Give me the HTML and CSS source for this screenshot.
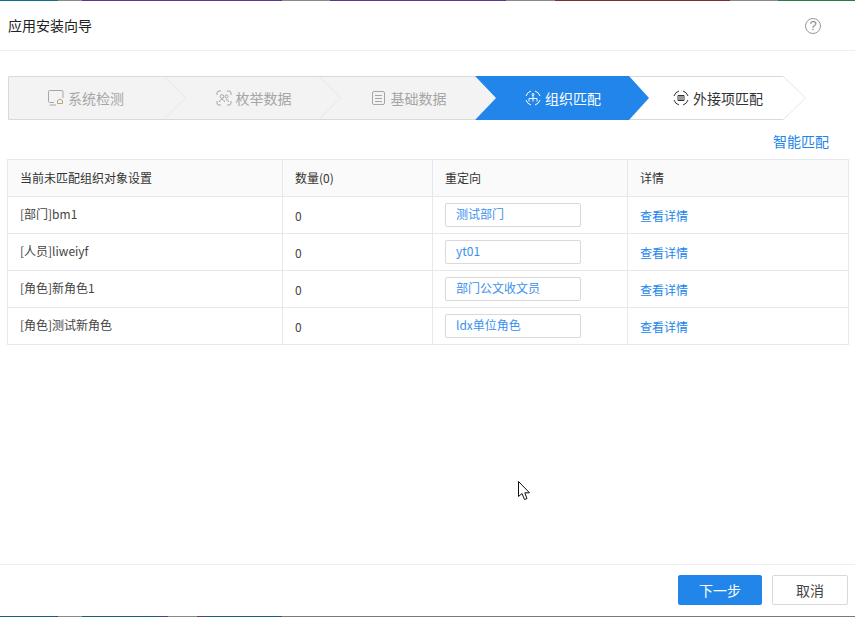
FILE: index.html
```html
<!DOCTYPE html>
<html lang="zh-CN">
<head>
<meta charset="utf-8">
<title>应用安装向导</title>
<link rel="stylesheet" href="styles.css">
</head>
<body>
<div class="page">
  <div class="strip-top"></div>
  <header class="header">
    <h1 class="title">应用安装向导</h1>
    <span class="help">?</span>
  </header>
  <nav class="stepper">
    <svg class="stepper-bg" width="798" height="44" viewBox="0 0 798 44">
      <polygon points="0,0 467,0 488,22 467,44 0,44" fill="#f3f3f3"/>
      <polygon points="621,0 776,0 798,22 776,44 621,44 641,22" fill="#fff"/>
      <path d="M0.5 0.5H467M0.5 43.5H467M0.5 0.5V43.5M621 0.5H775.5M621 43.5H775.5" fill="none" stroke="#d9d9d9"/>
      <path d="M156 0.5L177.5 22L156 43.5M311 0.5L332.5 22L311 43.5M775.5 0.5L797.5 22L775.5 43.5" fill="none" stroke="#e6e6e6"/>
      <polygon points="467,0 621,0 641,22 621,44 467,44 488,22" fill="#2185ea"/>
    </svg>
    <div class="step step-first">
      <svg class="step-icon" width="16" height="16" viewBox="0 0 16 16" fill="none" stroke="currentColor">
        <path d="M6 12.500H1.500A1 1 0 0 1 .5 11.500V1.500A1 1 0 0 1 1.500.5H14A1 1 0 0 1 15 1.500V8"/>
        <path d="M1.500 15H8"/>
        <path d="M9.500 13.500V10.500L12 9L14.500 10.500V13.500H9.500Z" stroke="#b9a27c"/>
      </svg>
      <span>系统检测</span>
    </div>
    <div class="step">
      <svg class="step-icon" width="16" height="16" viewBox="0 0 16 16" fill="none" stroke="currentColor">
        <path d="M1 5V3A2 2 0 0 1 3 1H5M11 1H13A2 2 0 0 1 15 3V5M15 11V13A2 2 0 0 1 13 15H11M5 15H3A2 2 0 0 1 1 13V11"/>
        <circle cx="6" cy="6.500" r="1.800"/>
        <circle cx="10.500" cy="6.500" r="1.500"/>
        <path d="M3.500 12C3.500 10 5 9.500 6 9.500S8.500 10 8.500 12M10 9.500C11.500 9.500 12.500 10.500 12.500 12"/>
      </svg>
      <span>枚举数据</span>
    </div>
    <div class="step">
      <svg class="step-icon" width="16" height="16" viewBox="0 0 16 16" fill="none" stroke="currentColor">
        <rect x="1.500" y="1.500" width="12" height="13" rx="1.500"/>
        <path d="M4 5.500H11M4 8.500H11M4 11.500H11"/>
      </svg>
      <span>基础数据</span>
    </div>
    <div class="step step-active">
      <svg class="step-icon" width="16" height="16" viewBox="0 0 16 16" fill="none" stroke="currentColor">
        <path d="M1 6A7.500 7.500 0 0 1 6 1M10 1A7.500 7.500 0 0 1 15 6M15 10A7.500 7.500 0 0 1 10 15M6 15A7.500 7.500 0 0 1 1 10"/>
        <path d="M4 11.500V8.500H12V11.500M8 5V11.500"/>
        <circle cx="8" cy="4.500" r="1"/>
      </svg>
      <span>组织匹配</span>
    </div>
    <div class="step step-current">
      <svg class="step-icon" width="16" height="16" viewBox="0 0 16 16" fill="none" stroke="currentColor">
        <path d="M1 6A7.500 7.500 0 0 1 6 1M10 1A7.500 7.500 0 0 1 15 6M15 10A7.500 7.500 0 0 1 10 15M6 15A7.500 7.500 0 0 1 1 10"/>
        <path d="M5 5.500H11V10.500H5ZM7 5.500V10.500M9 5.500V10.500"/>
      </svg>
      <span>外接项匹配</span>
    </div>
  </nav>
  <div class="actions"><a class="link link-large">智能匹配</a></div>
  <table class="grid">
    <colgroup>
      <col class="col-name"><col class="col-count"><col class="col-redirect"><col class="col-detail">
    </colgroup>
    <thead>
      <tr><th>当前未匹配组织对象设置</th><th>数量(0)</th><th>重定向</th><th>详情</th></tr>
    </thead>
    <tbody>
      <tr><td class="name">[部门]bm1</td><td class="num">0</td><td><div class="redirect">测试部门</div></td><td><a class="link">查看详情</a></td></tr>
      <tr><td class="name">[人员]liweiyf</td><td class="num">0</td><td><div class="redirect">yt01</div></td><td><a class="link">查看详情</a></td></tr>
      <tr><td class="name">[角色]新角色1</td><td class="num">0</td><td><div class="redirect">部门公文收文员</div></td><td><a class="link">查看详情</a></td></tr>
      <tr><td class="name">[角色]测试新角色</td><td class="num">0</td><td><div class="redirect">ldx单位角色</div></td><td><a class="link">查看详情</a></td></tr>
    </tbody>
  </table>
  <div class="spacer"></div>
  <footer class="footer">
    <button class="btn btn-primary">下一步</button>
    <button class="btn">取消</button>
  </footer>
  <div class="strip-bottom"></div>
  <svg class="cursor" width="13" height="20" viewBox="0 0 13 20">
    <path d="M.5.5V15.500L4 12.500L6.500 18.500L9 17.500L6.800 11.800H11.500Z" fill="#fff" stroke="#111" stroke-width="1"/>
  </svg>
</div>
</body>
</html>
```
FILE: styles.css
```css
* { box-sizing: border-box; }
html, body { margin: 0; padding: 0; background: #fff; }
body { font-family: "Noto Sans CJK SC", "Liberation Sans", sans-serif; color: #333; }
.page {
  position: relative;
  width: 855px;
  height: 617px;
  display: flex;
  flex-direction: column;
  overflow: hidden;
}
.strip-top {
  height: 1px;
  flex: none;
  background: linear-gradient(to right,
    #0f6f86 0 58px, #8a8a8a 58px 82px, #5f3590 82px 282px, #8a8a8a 282px 330px,
    #5f3590 330px 506px, #8a8a8a 506px 555px, #7c2f33 555px 730px, #8a8a8a 730px 778px,
    #2c7a3f 778px);
}
.strip-bottom {
  height: 1px;
  flex: none;
  background: linear-gradient(to right,
    #14607e 0 58px, #8a8a8a 58px 82px, #14607e 82px 158px, #5f3590 158px 168px,
    #8a8a8a 168px 197px, #5f3590 197px 205px, #14607e 205px 282px, #7a7a7a 282px);
}
.header {
  height: 50px;
  flex: none;
  display: flex;
  align-items: center;
  justify-content: space-between;
  padding: 0 34px 0 8px;
  border-bottom: 1px solid #eee;
}
.title { margin: 0 0 2px; font-size: 14px; font-weight: 400; color: #222; line-height: 20px; }
.help {
  width: 16px;
  height: 16px;
  border: 1.500px solid #999;
  border-radius: 50%;
  color: #888;
  font-size: 13px;
  font-family: "Liberation Sans", sans-serif;
  line-height: 13px;
  text-align: center;
}
.stepper {
  position: relative;
  flex: none;
  display: flex;
  width: 798px;
  height: 44px;
  margin: 25px 0 0 8px;
}
.stepper-bg { position: absolute; left: 0; top: 0; }
.step {
  position: relative;
  flex: none;
  width: 155px;
  display: flex;
  align-items: center;
  justify-content: center;
  gap: 4px;
  padding-left: 24px;
  font-size: 14px;
  color: #a6a6a6;
  white-space: nowrap;
}
.step-first { width: 156px; padding-left: 0; }
.step-active { color: #fff; width: 154px; }
.step-current { color: #333; padding-left: 25px; }
.step-icon { flex: none; }
.actions {
  flex: none;
  height: 39px;
  padding: 10px 26px 0 0;
  text-align: right;
  line-height: 20px;
}
.link { color: #2185ea; font-size: 12px; }
.link-large { font-size: 14px; }
.grid {
  flex: none;
  table-layout: fixed;
  border-collapse: collapse;
  width: 841px;
  margin-left: 7px;
  font-size: 12px;
}
.col-name { width: 275px; }
.col-count { width: 150px; }
.col-redirect { width: 195px; }
.col-detail { width: 221px; }
.grid th, .grid td {
  height: 37px;
  padding: 0 12px;
  border: 1px solid #e6e8f0;
  text-align: left;
  font-weight: 400;
  color: #444;
}
.grid th { background: #fafafa; color: #333; padding-bottom: 2px; }
.grid .name { padding-bottom: 3px; }
.num { color: #555; }
.redirect {
  width: 136px;
  height: 24px;
  border: 1px solid #d9d9d9;
  border-radius: 2px;
  padding-left: 10px;
  line-height: 20px;
  color: #3a90ec;
}
.spacer { flex: 1; }
.footer {
  flex: none;
  height: 52px;
  display: flex;
  justify-content: flex-end;
  align-items: flex-start;
  gap: 10px;
  padding: 10px 7px 0 0;
  border-top: 1px solid #eee;
}
.btn {
  width: 76px;
  height: 30px;
  padding: 0;
  border: 1px solid #d9d9d9;
  border-radius: 2px;
  background: #fff;
  color: #444;
  font: inherit;
  font-size: 14px;
}
.btn-primary { width: 84px; background: #2185ea; border-color: #2185ea; color: #fff; }
.cursor { position: absolute; left: 518px; top: 481px; }
```
